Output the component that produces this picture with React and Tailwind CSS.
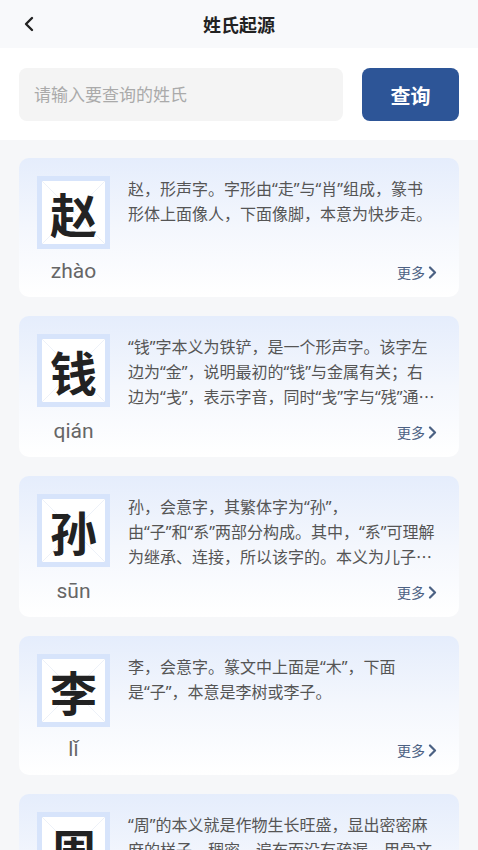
import { ChevronLeft } from "lucide-react";

const surnames = [
  {
    char: "赵",
    pinyin: "zhào",
    lines: ["赵，形声字。字形由“走”与“肖”组成，篆书", "形体上面像人，下面像脚，本意为快步走。"],
  },
  {
    char: "钱",
    pinyin: "qián",
    lines: [
      "“钱”字本义为铁铲，是一个形声字。该字左",
      "边为“金”，说明最初的“钱”与金属有关；右",
      "边为“戋”，表示字音，同时“戋”字与“残”通…",
    ],
  },
  {
    char: "孙",
    pinyin: "sūn",
    lines: [
      "孙，会意字，其繁体字为“孙”，",
      "由“子”和“系”两部分构成。其中，“系”可理解",
      "为继承、连接，所以该字的。本义为儿子…",
    ],
  },
  {
    char: "李",
    pinyin: "lǐ",
    lines: ["李，会意字。篆文中上面是“木”，下面", "是“子”，本意是李树或李子。"],
  },
  {
    char: "周",
    pinyin: "zhōu",
    lines: [
      "“周”的本义就是作物生长旺盛，显出密密麻",
      "麻的样子，稠密，遍布而没有疏漏，甲骨文",
      "像田中种满了庄稼，引申为周密、周全…",
    ],
  },
];

// curly quotes are narrow in the design, so set them in a latin face
function Line({ text }) {
  const parts = text.split(/([“”])/);
  return (
    <div className="h-[25px] whitespace-nowrap">
      {parts.map((p, i) =>
        p === "“" || p === "”" ? (
          <span key={i} className="font-['Noto_Sans',sans-serif]">
            {p}
          </span>
        ) : (
          <span key={i}>{p}</span>
        )
      )}
    </div>
  );
}

function CharBox({ char }) {
  return (
    <div className="relative w-[73px] h-[73px] shrink-0 border-[5px] border-[#d7e4fb] bg-white flex items-center justify-center">
      <svg className="absolute inset-0 w-full h-full" viewBox="0 0 63 63" preserveAspectRatio="none">
        <line x1="0" y1="0" x2="63" y2="63" stroke="#e8edf6" strokeWidth="0.8" />
        <line x1="63" y1="0" x2="0" y2="63" stroke="#e8edf6" strokeWidth="0.8" />
      </svg>
      <span className="relative text-[47px] leading-none font-semibold text-[#222]">{char}</span>
    </div>
  );
}

function SurnameCard({ item }) {
  return (
    <div className="rounded-[10px] bg-gradient-to-b from-[#e5edfc] via-[#f4f7fd] to-white pt-[18px] pl-[18px] pr-[22px] pb-[12px]">
      <div className="flex items-start gap-[18px]">
        <CharBox char={item.char} />
        <div className="text-[16px] leading-[25px] text-[#555]">
          {item.lines.map((line) => (
            <Line key={line} text={line} />
          ))}
        </div>
      </div>
      <div className="flex items-center justify-between mt-[10px] h-[26px]">
        <span className="w-[73px] text-center text-[21px] text-[#666] font-['Roboto','Noto_Sans',sans-serif]">
          {item.pinyin}
        </span>
        <span className="flex items-center gap-[3px] text-[14px] text-[#4b6183]">
          更多
          <svg className="w-[9px] h-[13px]" viewBox="0 0 9 13" fill="none">
            <polyline points="2,1.5 7,6.5 2,11.5" stroke="currentColor" strokeWidth="2.2" strokeLinecap="round" strokeLinejoin="round" />
          </svg>
        </span>
      </div>
    </div>
  );
}

export default function App() {
  return (
    <div className="w-[478px] h-[850px] overflow-hidden bg-[#f6f7f9] font-['Noto_Sans_CJK_SC','Noto_Sans',sans-serif]">
      <header className="h-[48px] bg-[#f8f9fb] relative flex items-center justify-center">
        <ChevronLeft className="absolute left-[16px] top-[12px] w-[26px] h-[24px] text-[#222]" strokeWidth={2.4} />
        <h1 className="text-[18px] font-bold text-[#222]">姓氏起源</h1>
      </header>

      <div className="bg-white h-[92px] px-[19px] flex items-center gap-[19px]">
        <div className="flex-1 h-[53px] rounded-[8px] bg-[#f4f4f4] flex items-center px-[15px] text-[17px] text-[#aaa]">
          请输入要查询的姓氏
        </div>
        <button className="w-[97px] h-[53px] rounded-[8px] bg-[#2d5597] text-white text-[20px] font-bold pt-[4px]">
          查询
        </button>
      </div>

      <div className="px-[19px] pt-[18px] flex flex-col gap-[19px]">
        {surnames.map((item) => (
          <SurnameCard key={item.char} item={item} />
        ))}
      </div>
    </div>
  );
}
